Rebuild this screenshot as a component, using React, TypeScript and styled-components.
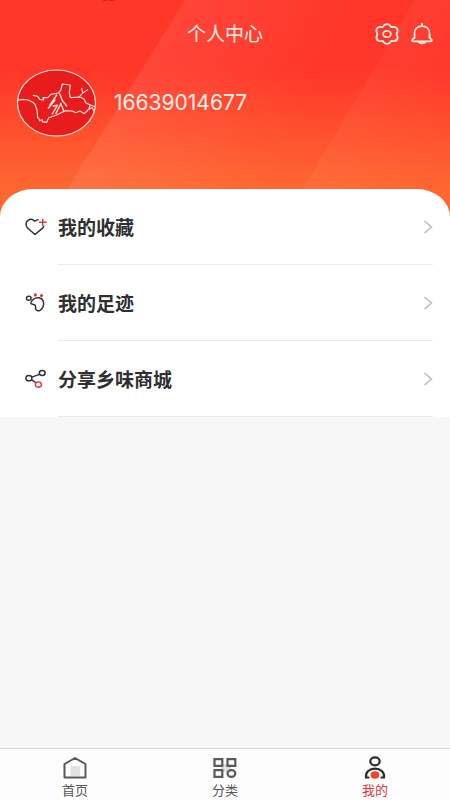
import React from 'react';
import styled, { createGlobalStyle } from 'styled-components';

const GlobalStyle = createGlobalStyle`
  * { box-sizing: border-box; }
  body {
    margin: 0;
    background: #f7f7f7;
    color: #333;
    font-family: "Liberation Sans", "Noto Sans CJK SC", sans-serif;
  }
  button, a { font-family: "Noto Sans CJK SC", sans-serif; }
`;

const Page = styled.div`
  min-height: 100vh;
  display: flex;
  flex-direction: column;
`;

const Header = styled.header`
  position: relative;
  padding-bottom: 80px;
  background: linear-gradient(#ff3628 0, #ff3628 70px, #ff6630 185px);
`;

const Backdrop = styled.svg`
  position: absolute;
  inset: 0;
  width: 100%;
  height: 100%;
`;

const TitleBar = styled.div`
  position: relative;
  display: grid;
  grid-template-columns: 1fr auto 1fr;
  align-items: center;
  height: 66px;
  padding: 0 16px;
`;

const Title = styled.h1`
  grid-column: 2;
  margin: 0;
  color: #fff1ea;
  font: 400 19px/30px "Noto Sans CJK SC", sans-serif;
`;

const Actions = styled.div`
  display: flex;
  justify-content: flex-end;
  padding-top: 2px;
  gap: 11px;
`;

const IconButton = styled.button`
  display: flex;
  padding: 0;
  border: 0;
  background: none;
  color: #fff1ea;
  cursor: pointer;
`;

const Profile = styled.div`
  position: relative;
  display: flex;
  align-items: center;
  gap: 17px;
  padding: 3px 17px 0;
`;

const Phone = styled.span`
  color: #fff1ea;
  font: 400 21px/28px Inter, sans-serif;
`;

const Sheet = styled.main`
  position: relative;
  margin-top: -28px;
  background: #fff;
  border-radius: 33px 33px 0 0 / 28px 28px 0 0;
`;

const MenuItem = styled.button`
  display: flex;
  align-items: center;
  width: 100%;
  height: 76px;
  padding: 0 17px 0 25px;
  border: 0;
  background: none;
  color: #303030;
  text-align: left;
  cursor: pointer;
`;

const MenuIcon = styled.span`
  display: flex;
  width: 33px;
`;

const MenuBody = styled.span`
  flex: 1;
  display: flex;
  align-items: center;
  justify-content: space-between;
  height: 100%;
  border-bottom: 1px solid #ebebeb;
  font-size: 19px;
  font-weight: 700;
`;

const TabBar = styled.nav`
  display: flex;
  margin-top: auto;
  height: 52px;
  border-top: 1px solid #d8d8d8;
  background: #fdfdfd;
`;

const Tab = styled.a<{ $active?: boolean }>`
  flex: 1;
  display: flex;
  flex-direction: column;
  align-items: center;
  padding-top: 7px;
  color: ${p => (p.$active ? '#d8393a' : '#555')};
  font-size: 13px;
  line-height: 20px;
  text-decoration: none;
`;

const Avatar = () => (
  <svg width="80" height="68" viewBox="0 0 80 68" role="img" aria-label="头像" fill="none" stroke="#ffe4dc" strokeLinejoin="round" strokeLinecap="round">
    <ellipse cx="39.5" cy="34" rx="39" ry="33" fill="#e81c1c" strokeWidth="1.2" />
    <path strokeWidth="1.2" d="M1.300 31L6 30.300l5.300.7 4 2 2.700 2.300 2 5.700.7 7.700 2 2v1l2.600-1v2l4.400.6 2-4.600 8-2.700 8.300-4.300 7.300.3 3.400 1.700 4.300-1.700 4.300 2.700 4.700-4.700 1.300-4-4.600-2.300-1.400-3.400-4-2.300-10 .7-1-4.700 1-8-8-1-1.600 6.300-2.400 2.700-7.300 1.300-3.300 3.400H26l.7 2.300-4-.7-2-3-4.400-1" />
    <path strokeWidth="1.1" d="M62 28l3.700-4-1-4.700M65.700 24l5-3.300M73.300 36l5 2M72 40l3.300-1.300 2 4" />
    <path strokeWidth="1.400" d="M39.700 26L33 36M38 31l-6.700 8.300M43 25l2 6 4.700 6M36.300 37l4-.7-5 8.700M44 34.300l-5 10M44 35l3 7.700" />
  </svg>
);

const GearIcon = () => (
  <svg width="24" height="22" viewBox="0 0 24 22" fill="none" stroke="currentColor" strokeWidth="1.8" strokeLinejoin="round">
    <path d="M9.400 2Q12 .4 14.600 2L16.200 4L19.500 3.900Q22.800 4.800 22.600 8L21.600 11L22.600 14Q22.800 17.200 19.500 18.100L16.200 18L14.600 20Q12 21.600 9.400 20L7.800 18L4.500 18.100Q1.200 17.200 1.400 14L2.400 11L1.400 8Q1.200 4.800 4.500 3.900L7.800 4Z" />
    <ellipse cx="12" cy="11" rx="3.800" ry="3.200" />
  </svg>
);

const BellIcon = () => (
  <svg width="24" height="22" viewBox="0 0 24 22" fill="none" stroke="currentColor" strokeWidth="1.800" strokeLinecap="round" strokeLinejoin="round">
    <path d="M12 1v2M4.500 14.800V10.500C4.500 6 7.500 3.200 12 3.200s7.500 2.800 7.500 7.300v4.300l1.900 1.500c1 .9.500 2-.7 2H3.300c-1.200 0-1.700-1.100-.7-2ZM8.500 18.800c1.200 2.200 5.800 2.200 7 0" />
  </svg>
);

const HeartIcon = () => (
  <svg width="23" height="20" viewBox="0 0 23 20" fill="none" strokeWidth="1.500" strokeLinecap="round" strokeLinejoin="round">
    <path stroke="#333" d="M13 2.800C11.500 2.800 10.500 3.600 9.800 4.200 8.200 2.500 5.500 1.800 3.200 3.200.4 5 .4 8.500 2.500 11L10 17.500l7.300-6.100c.8-.8 1.200-1.400 1.400-2.200" />
    <path stroke="#e13b3b" d="M17.800 2.200v6M14.600 5.200h6.500" />
  </svg>
);

const FootIcon = () => (
  <svg width="23" height="20" viewBox="0 0 23 20" fill="none" stroke="#333" strokeWidth="1.500">
    <ellipse cx="3.800" cy="5.200" rx="2.300" ry="2" />
    <path strokeLinejoin="round" d="M8.500 6.200C11.300 3.800 16.800 4.300 18.300 8.200c1 3.300-.5 7.600-3.200 9.100-1.800 1-4.300.2-4.600-1.600 0-1.300.6-2.600-.4-3.500-1-.8-4-.5-4.300-2.200C5.600 8.600 7.500 7.100 8.500 6.200Z" />
    <g fill="#dc3838" stroke="none"><circle cx="10.300" cy="1.900" r="1.600" /><circle cx="16.500" cy="2.600" r="1.600" /></g>
  </svg>
);

const ShareIcon = () => (
  <svg width="23" height="20" viewBox="0 0 23 20" fill="none" stroke="#333" strokeWidth="1.500">
    <ellipse cx="3.900" cy="9.200" rx="3" ry="2.600" />
    <ellipse cx="17.200" cy="4" rx="2.900" ry="2.500" />
    <path d="M6.700 8.100l7.800-2.700M6.300 10.700l4.600 3" />
    <ellipse cx="13.400" cy="15.600" rx="3" ry="2.600" stroke="#e24444" />
  </svg>
);

const Chevron = () => (
  <svg width="10" height="14" viewBox="0 0 10 14" fill="none" stroke="#bbb" strokeWidth="1.500">
    <path d="M1.500 1l7 6-7 6" />
  </svg>
);

const HomeIcon = () => (
  <svg width="26" height="24" viewBox="0 0 26 24">
    <path fill="#e2e2e2" d="M8.500 10h9.500v10H8.500z" />
    <path fill="none" stroke="#595959" strokeWidth="2" strokeLinejoin="round" d="M2.500 8L13 2l10.500 6V21.500h-21z" />
  </svg>
);

const CategoryIcon = () => (
  <svg width="26" height="24" viewBox="0 0 26 24">
    <path fill="#dedede" d="M9 8h10v8H9z" />
    <g fill="none" stroke="#595959" strokeWidth="2.200">
      <path d="M2.500 3.200h7.800v6.600H2.500zM15.500 3.200h7.800v6.600h-7.800zM2.500 14.200h7.800v6.600H2.500z" />
      <ellipse cx="19.400" cy="17.500" rx="3.900" ry="3.300" />
    </g>
  </svg>
);

const PersonIcon = () => (
  <svg width="26" height="24" viewBox="0 0 26 24">
    <g fill="none" stroke="#2d2d2d" strokeWidth="2.200" strokeLinecap="round">
      <ellipse cx="13" cy="5.300" rx="4.700" ry="4" />
      <path d="M6.500 21.500h-2.500C3.300 16 7.500 12.600 13 12.600S22.700 16 22 21.500h-2.500" />
    </g>
    <ellipse cx="13" cy="19" rx="4.400" ry="3.800" fill="#f2492b" />
  </svg>
);

const menu = [
  { label: '我的收藏', icon: <HeartIcon /> },
  { label: '我的足迹', icon: <FootIcon /> },
  { label: '分享乡味商城', icon: <ShareIcon /> },
];

const tabs = [
  { label: '首页', icon: <HomeIcon />, href: '#home' },
  { label: '分类', icon: <CategoryIcon />, href: '#category' },
  { label: '我的', icon: <PersonIcon />, href: '#mine', active: true },
];

export default function App() {
  return (
    <Page>
      <GlobalStyle />
      <Header>
        <Backdrop viewBox="0 0 450 217" preserveAspectRatio="none" aria-hidden="true">
          <defs>
            <linearGradient id="bandA" gradientUnits="userSpaceOnUse" x1="120" y1="60" x2="290" y2="150">
              <stop offset="0" stopColor="#fff" stopOpacity=".09" />
              <stop offset="1" stopColor="#fff" stopOpacity="0" />
            </linearGradient>
            <linearGradient id="bandB" gradientUnits="userSpaceOnUse" x1="365" y1="90" x2="450" y2="140">
              <stop offset="0" stopColor="#fff" stopOpacity=".04" />
              <stop offset="1" stopColor="#fff" stopOpacity="0" />
            </linearGradient>
          </defs>
          <path fill="url(#bandA)" d="M185 0H415L286 217H50z" />
          <path fill="url(#bandB)" d="M415 0H450V217H286z" />
          <path fill="#8c1c14" fillOpacity=".5" d="M103 0h4v1h-4zM109 0h6v1h-6z" />
        </Backdrop>
        <TitleBar>
          <Title>个人中心</Title>
          <Actions>
            <IconButton type="button" aria-label="设置"><GearIcon /></IconButton>
            <IconButton type="button" aria-label="消息"><BellIcon /></IconButton>
          </Actions>
        </TitleBar>
        <Profile>
          <Avatar />
          <Phone>16639014677</Phone>
        </Profile>
      </Header>
      <Sheet>
        {menu.map(({ label, icon }) => (
          <MenuItem key={label} type="button">
            <MenuIcon>{icon}</MenuIcon>
            <MenuBody>{label}<Chevron /></MenuBody>
          </MenuItem>
        ))}
      </Sheet>
      <TabBar>
        {tabs.map(({ label, icon, href, active }) => (
          <Tab key={label} href={href} $active={active} aria-current={active ? 'page' : undefined}>
            {icon}
            {label}
          </Tab>
        ))}
      </TabBar>
    </Page>
  );
}
